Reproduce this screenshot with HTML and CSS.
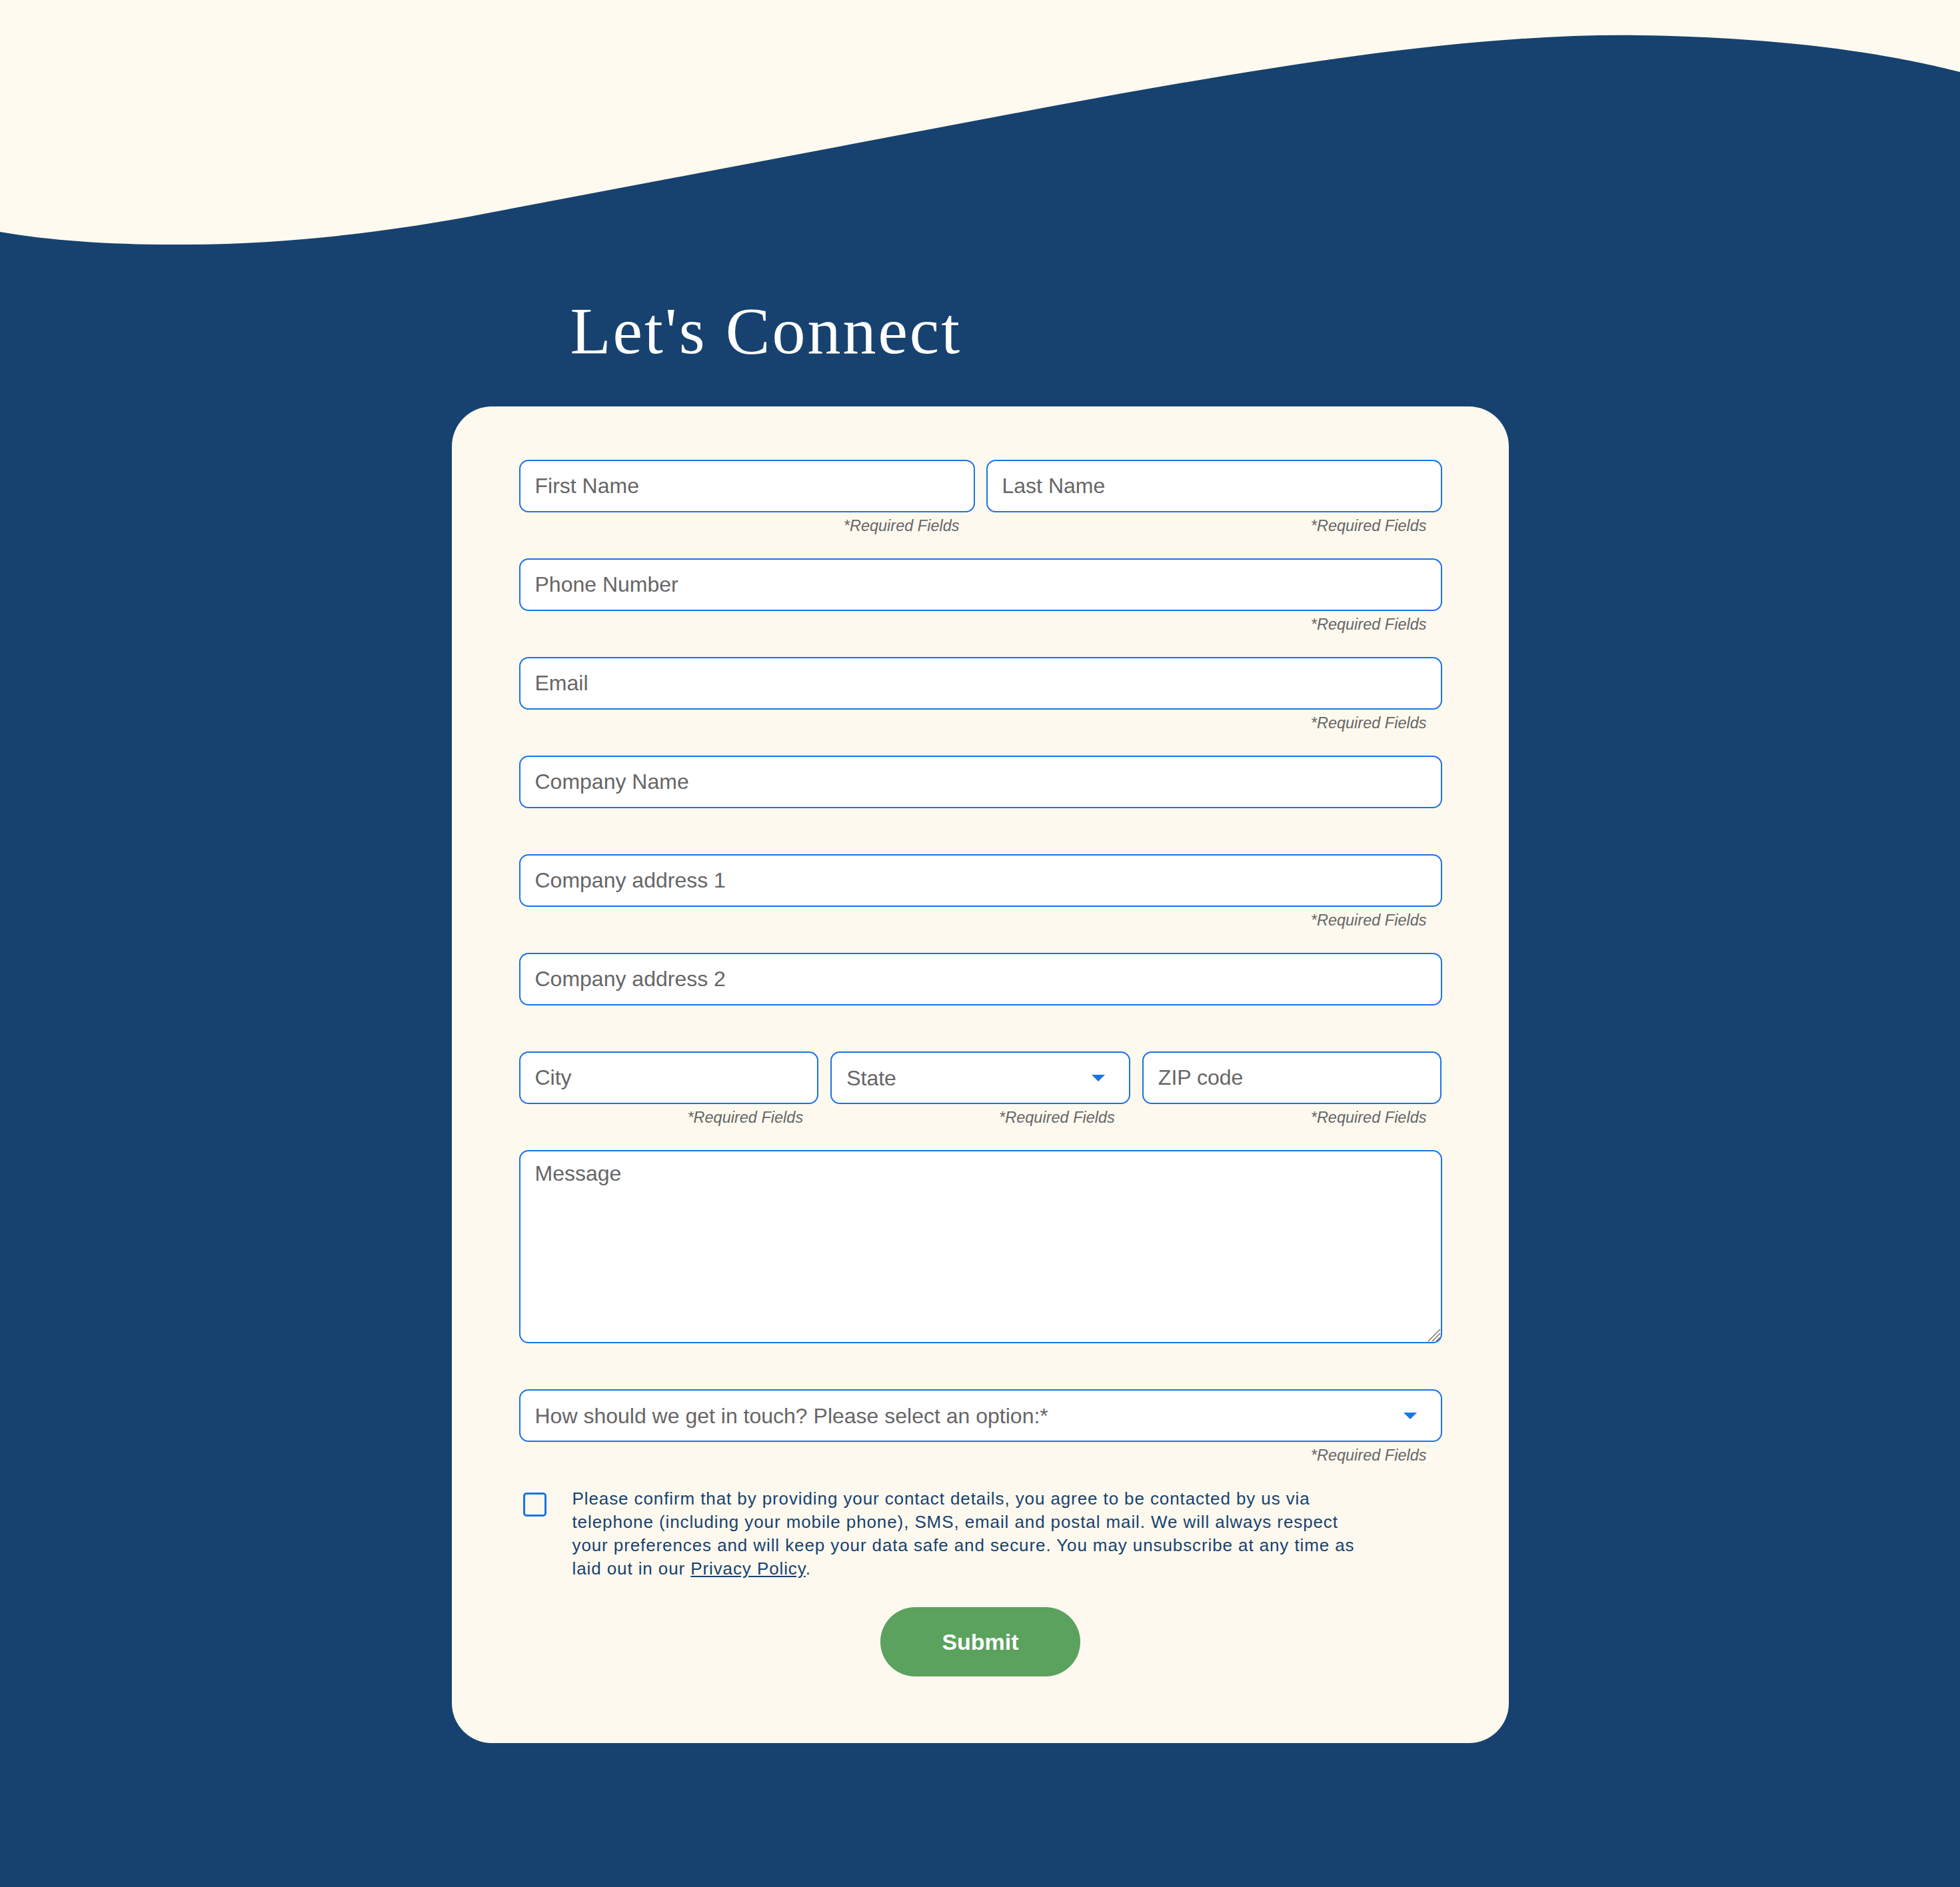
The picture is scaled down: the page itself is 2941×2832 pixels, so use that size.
FILE: index.html
```html
<!DOCTYPE html>
<html lang="en">
<head>
<meta charset="utf-8">
<title>Let's Connect</title>
<link rel="stylesheet" href="styles.css">
</head>
<body>
<header class="hero">
  <svg class="wave" viewBox="0 0 2941 400" preserveAspectRatio="none" aria-hidden="true">
    <path class="wave-fill" d="M0,0 L2941,0 L2941,108 C2850,85 2700,56 2457,53 C2200,50 1900,100 1575,160 L731,320 C600,345 450,366 281,367 C180,368 80,362 0,348 Z"/>
  </svg>
  <div class="title-wrap">
    <h1 class="title">Let's Connect</h1>
  </div>
</header>

<main class="card">
  <form class="form">
    <div class="fields">
      <div class="row two">
        <div class="field">
          <input class="control" type="text" placeholder="First Name">
          <p class="req">*Required Fields</p>
        </div>
        <div class="field">
          <input class="control" type="text" placeholder="Last Name">
          <p class="req">*Required Fields</p>
        </div>
      </div>
      <div class="field">
        <input class="control" type="tel" placeholder="Phone Number">
        <p class="req">*Required Fields</p>
      </div>
      <div class="field">
        <input class="control" type="email" placeholder="Email">
        <p class="req">*Required Fields</p>
      </div>
      <div class="field">
        <input class="control" type="text" placeholder="Company Name">
        <p class="req"></p>
      </div>
      <div class="field">
        <input class="control" type="text" placeholder="Company address 1">
        <p class="req">*Required Fields</p>
      </div>
      <div class="field">
        <input class="control" type="text" placeholder="Company address 2">
        <p class="req"></p>
      </div>
      <div class="row three">
        <div class="field">
          <input class="control" type="text" placeholder="City">
          <p class="req">*Required Fields</p>
        </div>
        <div class="field">
          <div class="select-wrap">
            <select class="control select">
              <option selected disabled>State</option>
            </select>
            <svg class="caret" viewBox="0 0 20 10" aria-hidden="true"><path d="M0 0 L20 0 L10 10 Z"/></svg>
          </div>
          <p class="req">*Required Fields</p>
        </div>
        <div class="field">
          <input class="control" type="text" placeholder="ZIP code">
          <p class="req">*Required Fields</p>
        </div>
      </div>
      <div class="field">
        <div class="textarea-wrap">
          <textarea class="control message" placeholder="Message"></textarea>
          <svg class="grip" viewBox="0 0 24 24" aria-hidden="true">
            <path d="M23 5 L5 23 M23 11 L11 23 M23 17 L17 23"/>
          </svg>
        </div>
        <p class="req"></p>
      </div>
      <div class="field">
        <div class="select-wrap">
          <select class="control select">
            <option selected disabled>How should we get in touch? Please select an option:*</option>
          </select>
          <svg class="caret" viewBox="0 0 20 10" aria-hidden="true"><path d="M0 0 L20 0 L10 10 Z"/></svg>
        </div>
        <p class="req">*Required Fields</p>
      </div>
    </div>

    <label class="consent">
      <input class="check" type="checkbox">
      <span class="consent-text">Please confirm that by providing your contact details, you agree to be contacted by us via telephone (including your mobile phone), SMS, email and postal mail. We will always respect your preferences and will keep your data safe and secure. You may unsubscribe at any time as laid out in our <a class="link" href="#">Privacy Policy</a>.</span>
    </label>

    <div class="actions">
      <button class="submit" type="submit">Submit</button>
    </div>
  </form>
</main>
</body>
</html>
```

FILE: styles.css
```css
html, body {
  margin: 0;
  padding: 0;
}

body {
  background: #17426f;
  padding-bottom: 216px;
  font-family: "Liberation Sans", Arial, sans-serif;
}

.hero {
  display: block;
}

.wave {
  display: block;
  width: 100%;
  height: 400px;
}

.wave-fill {
  fill: #fefaef;
}

.title-wrap {
  width: 1230px;
  margin: 0 auto;
}

.title {
  margin: 47px 0 0;
  font-family: "Liberation Serif", "Times New Roman", serif;
  font-weight: 400;
  font-size: 100px;
  line-height: 100px;
  letter-spacing: 3px;
  color: #ffffff;
}

.card {
  display: block;
  box-sizing: border-box;
  width: 1586px;
  margin: 63px auto 0;
  padding: 80px 100px 100px 101px;
  background: #fdf9ef;
  border-radius: 60px;
}

.form {
  display: flex;
  flex-direction: column;
}

.fields {
  display: flex;
  flex-direction: column;
  gap: 35px;
}

.row {
  display: grid;
}

.row.two {
  grid-template-columns: 1fr 1fr;
  column-gap: 17px;
}

.row.three {
  grid-template-columns: 1fr 1fr 1fr;
  column-gap: 18px;
}

.field {
  display: flex;
  flex-direction: column;
  min-width: 0;
}

.control {
  display: block;
  box-sizing: border-box;
  width: 100%;
  height: 79px;
  margin: 0;
  padding: 0 22px;
  border: 2px solid #1a73e8;
  border-radius: 14px;
  background: #ffffff;
  font-family: "Liberation Sans", Arial, sans-serif;
  font-size: 32px;
  color: #666666;
  outline: none;
}

.control::placeholder {
  color: #666666;
  opacity: 1;
}

.textarea-wrap {
  position: relative;
}

.message {
  height: 290px;
  padding: 15px 22px;
  resize: none;
  line-height: 37px;
}

.grip {
  position: absolute;
  right: 2px;
  bottom: 2px;
  width: 24px;
  height: 24px;
  stroke: #7a7a7a;
  stroke-width: 1.6;
  fill: none;
  pointer-events: none;
}

.select-wrap {
  position: relative;
}

.select {
  appearance: none;
  -webkit-appearance: none;
  padding-right: 70px;
}

.caret {
  position: absolute;
  right: 38px;
  top: 50%;
  width: 20px;
  height: 10px;
  margin-top: -5px;
  fill: #1a73e8;
  pointer-events: none;
}

.req {
  box-sizing: border-box;
  margin: 6px 0 0;
  height: 28px;
  padding-right: 23px;
  font-size: 23.5px;
  line-height: 28px;
  font-style: italic;
  color: #666666;
  text-align: right;
  white-space: nowrap;
}

.consent {
  display: flex;
  align-items: flex-start;
  margin-top: 34px;
}

.check {
  appearance: none;
  -webkit-appearance: none;
  flex-shrink: 0;
  box-sizing: border-box;
  width: 35px;
  height: 36px;
  margin: 8px 39px 0 6px;
  border: 3.5px solid #1a73e8;
  border-radius: 5px;
  background: transparent;
}

.consent-text {
  display: block;
  width: 1190px;
  font-size: 26px;
  line-height: 35px;
  letter-spacing: 0.9px;
  color: #17426f;
}

.link {
  color: #17426f;
  text-decoration: underline;
}

.actions {
  display: flex;
  justify-content: center;
  margin-top: 40px;
}

.submit {
  width: 300px;
  height: 104px;
  border: none;
  border-radius: 52px;
  background: #5aa25e;
  color: #ffffff;
  font-family: "Liberation Sans", Arial, sans-serif;
  font-weight: 700;
  font-size: 34px;
  padding: 0;
}
```
